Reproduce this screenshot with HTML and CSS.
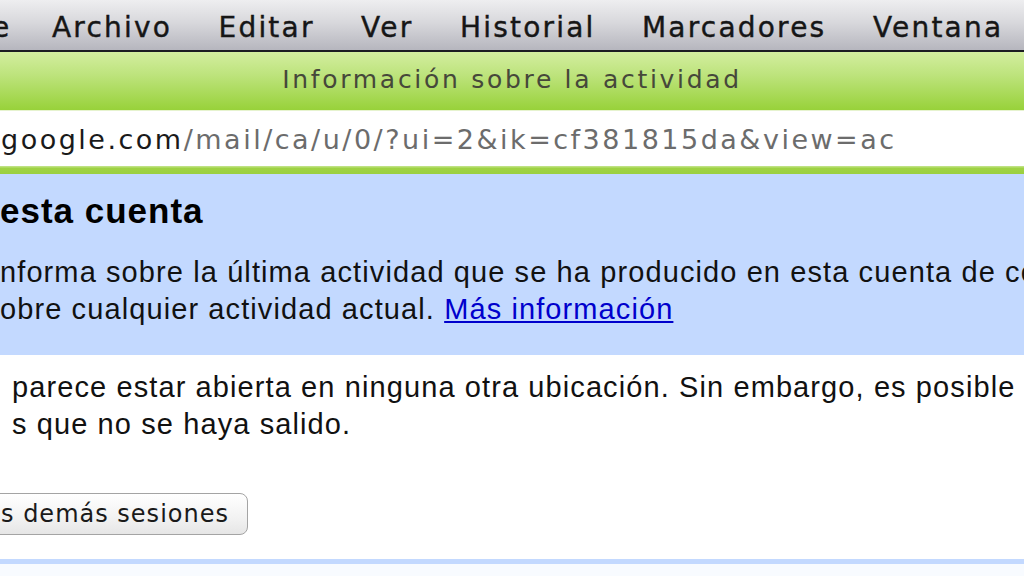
FILE: index.html
```html
<!DOCTYPE html>
<html lang="es">
<head>
  <meta charset="UTF-8">
  <title>Información sobre la actividad</title>
  <link rel="stylesheet" href="styles.css">
</head>
<body>

  <div class="menubar">
    <span class="menu-app">e</span>
    <span>Archivo</span>
    <span>Editar</span>
    <span>Ver</span>
    <span>Historial</span>
    <span>Marcadores</span>
    <span>Ventana</span>
  </div>

  <div class="titlebar">Información sobre la actividad</div>

  <div class="omnibox">
    <span class="host">google.com</span><span class="path">/mail/ca/u/0/?ui=2&amp;ik=cf381815da&amp;view=ac</span>
  </div>
  <div class="toolbar-edge"></div>

  <div class="page">
    <div class="notice">
      <h2>esta cuenta</h2>
      <p>nforma sobre la última actividad que se ha producido en esta cuenta de co<br>obre cualquier actividad actual. <a href="#">Más información</a></p>
    </div>

    <div class="sessions">
      <p>parece estar abierta en ninguna otra ubicación. Sin embargo, es posible<br>s que no se haya salido.</p>
      <button type="button" class="btn">s demás sesiones</button>
    </div>

    <div class="footer-rule"></div>
  </div>

</body>
</html>
```

FILE: styles.css
```css
html, body {
  margin: 0;
  height: 100%;
}

body {
  overflow: hidden;
  background-color: #f8fbff;
  font-family: 'Liberation Sans', Arial, sans-serif;
  color: #111;
}

/* mac menu bar */
.menubar {
  height: 46px;
  padding-top: 4px;
  display: flex;
  gap: 46.5px;
  align-items: center;
  background: linear-gradient(#eeeef0, #d8d8dc 45%, #b6b6be);
  border-bottom: 2px solid #1c1c22;
  font-family: 'DejaVu Sans', sans-serif;
  font-size: 28px;
  letter-spacing: 2.2px;
  color: #161616;
  -webkit-text-stroke: 0.4px #161616;
  white-space: nowrap;
}

.menu-app {
  margin-left: -8px;
  margin-right: -6px;
}

/* browser window title */
.titlebar {
  height: 58px;
  line-height: 56px;
  text-align: center;
  background: linear-gradient(#d3ee9f, #bde37c 40%, #98d23a);
  font-family: 'DejaVu Sans', sans-serif;
  font-size: 25px;
  letter-spacing: 2.7px;
  color: #46483a;
  white-space: nowrap;
}

.omnibox {
  height: 55px;
  line-height: 58px;
  padding-left: 1px;
  background-color: #fff;
  border-top: 1px solid #e6f3cf;
  font-family: 'DejaVu Sans', sans-serif;
  font-size: 27px;
  letter-spacing: 2.5px;
  white-space: nowrap;
}

.omnibox .host {
  color: #1a1a1a;
}

.omnibox .path {
  color: #6c6c6c;
}

.toolbar-edge {
  height: 8px;
  background: linear-gradient(#c6e692, #9fd244 30%, #9bd03f);
}

/* gmail page */
.notice {
  background-color: #c3d9ff;
  padding: 17px 0 27px 0;
}

.notice h2 {
  margin: 0 0 23px 0;
  font-size: 35px;
  line-height: 40px;
  letter-spacing: 1px;
  color: #000;
}

.notice p,
.sessions p {
  margin: 0;
  font-size: 29px;
  line-height: 37px;
  letter-spacing: 1.1px;
  white-space: nowrap;
}

.notice a {
  color: #0000cc;
}

.sessions {
  padding: 14px 0 0 12px;
  background-color: #fff;
}

.btn {
  display: block;
  height: 42px;
  margin: 50px 0 0 -22px;
  padding: 0 18px 0 10px;
  border: 1px solid #a4a4a4;
  border-radius: 8px;
  background: linear-gradient(#ffffff, #f2f2f2 60%, #e6e6e6);
  font-family: 'DejaVu Sans', sans-serif;
  font-size: 24px;
  letter-spacing: 1px;
  color: #1a1a1a;
}

.btn + * {
  margin-top: 0;
}

.sessions::after {
  content: "";
  display: block;
  height: 24px;
}

.footer-rule {
  height: 5px;
  background-color: #c3d9ff;
}
```
